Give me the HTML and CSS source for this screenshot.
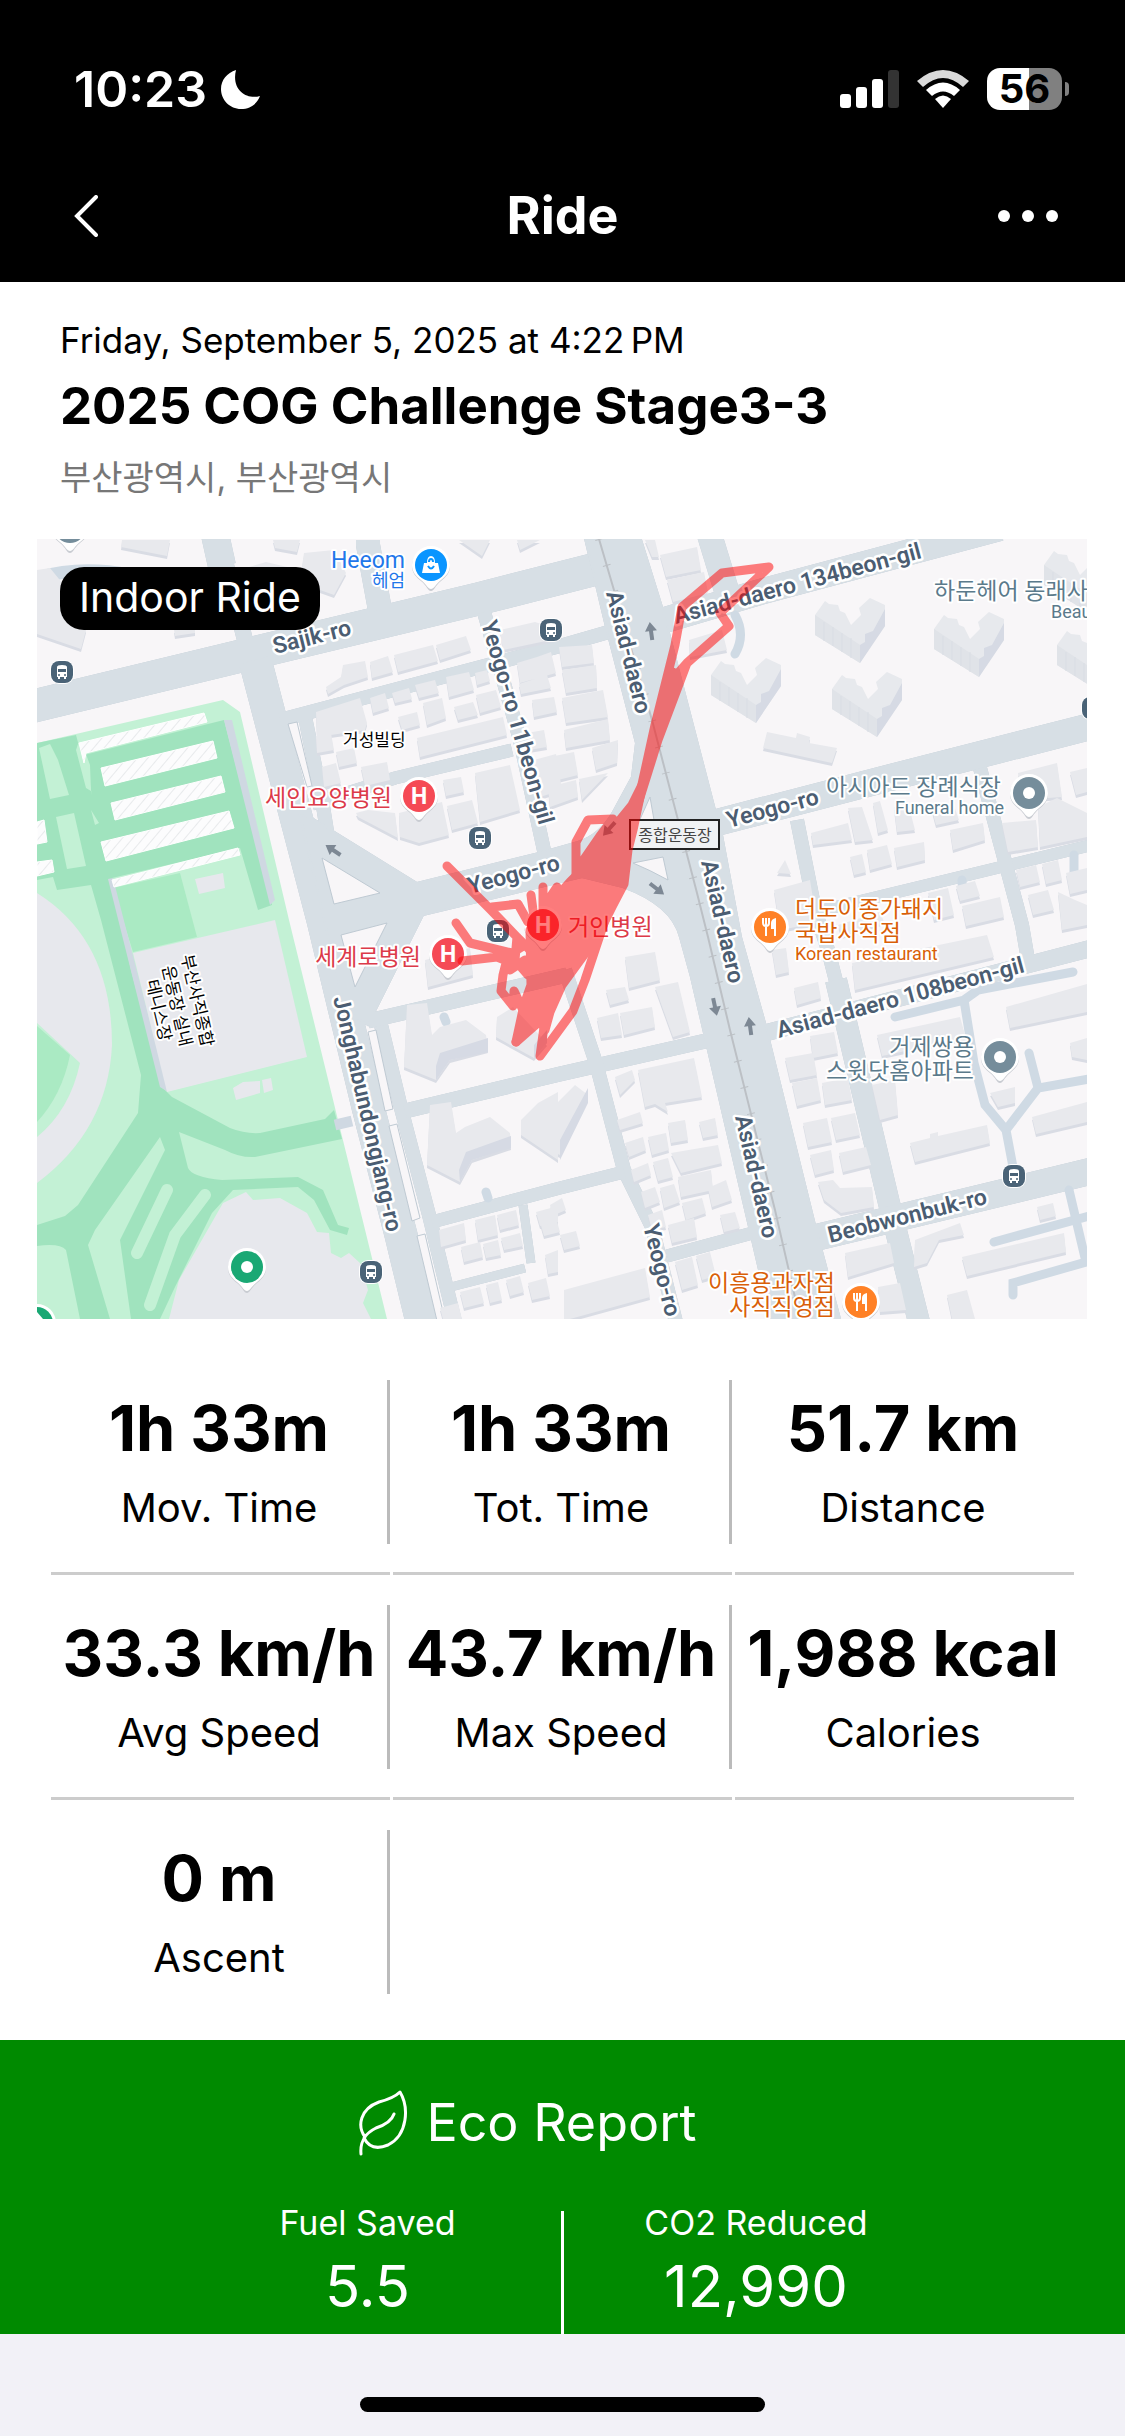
FILE: index.html
```html
<!DOCTYPE html>
<html lang="en">

<head>
  <meta charset="UTF-8">
  <meta name="viewport" content="width=device-width, initial-scale=1.0">
  <title>Ride</title>
  <link rel="stylesheet" href="styles.css">
</head>

<body>
  <div class="app">
    <header class="top">
      <div class="status-bar">
        <span class="clock">10:23</span>
        <svg class="moon" viewBox="0 0 39 39" width="39" height="39" aria-hidden="true">
          <path d="M15 0C6 3 0 10 0 19C0 30 9 39 20 39C29 39 36 34 39 26C26 30 10 20 15 0Z" fill="#fff" />
        </svg>
        <svg class="signal" viewBox="0 0 60 38" width="60" height="38" aria-hidden="true">
          <rect x="0" y="24" width="11" height="14" rx="3" fill="#fff" />
          <rect x="16" y="17" width="11" height="21" rx="3" fill="#fff" />
          <rect x="32" y="9" width="11" height="29" rx="3" fill="#fff" />
          <rect x="48" y="0" width="11" height="38" rx="3" fill="#333" />
        </svg>
        <svg class="wifi" viewBox="0 0 52 38" width="52" height="38" aria-hidden="true">
          <path d="M0 11Q26 -11 52 11L46 17Q26 -1 6 17Z" fill="#d9d9d9" />
          <path d="M9 20Q26 5 43 20L37 26Q26 17 15 26Z" fill="#fff" />
          <path d="M18 29Q26 22 34 29L26 38Z" fill="#fff" />
        </svg>
        <div class="battery">56</div>
      </div>
      <nav class="nav-bar">
        <button class="nav-button" aria-label="Back">
          <svg viewBox="0 0 24 42" width="24" height="42">
            <path d="M22 2L3 21L22 40" fill="none" stroke="#fff" stroke-width="4" stroke-linecap="round" />
          </svg>
        </button>
        <h1 class="nav-title">Ride</h1>
        <button class="nav-button" aria-label="More">
          <svg viewBox="0 0 62 14" width="62" height="14">
            <circle cx="7" cy="7" r="6" fill="#fff" />
            <circle cx="31" cy="7" r="6" fill="#fff" />
            <circle cx="55" cy="7" r="6" fill="#fff" />
          </svg>
        </button>
      </nav>
    </header>

    <main class="content">
      <div class="ride-info">
        <p class="ride-date">Friday, September 5, 2025 at 4:22&#8239;PM</p>
        <h2 class="ride-name">2025 COG Challenge Stage3-3</h2>
        <p class="ride-place">부산광역시, 부산광역시</p>
      </div>

      <div class="map">
        <span class="ride-type">Indoor Ride</span>
        <svg class="map-canvas" viewBox="37 539 1050 780" role="img" aria-label="Map of the ride">
          <defs>
            <symbol id="tower" viewBox="0 0 72 68">
              <path d="M0 17L10 3L14 6L23 7L25 13L30 15L36 27L46 17L44 10L55 0L70 7V28L45 65L0 37Z" fill="#e7e9ed" />
              <path d="M0 17L45 47V65L0 37Z" fill="#e0e3e8" />
              <path d="M45 47L50 44V36L58 33L70 11V28L45 65Z" fill="#d6dae4" />
              <path d="M9 24V43M18 29V48M27 35V54M36 40V60" stroke="#d9dde4" />
            </symbol>
            <symbol id="bus" viewBox="0 0 26 26">
              <rect x="1" y="1" width="24" height="24" rx="9" fill="#fff" />
              <rect x="2" y="2" width="22" height="22" rx="8" fill="#4a6377" />
              <path d="M8 8Q8 6 13 6Q18 6 18 8V18H17V20H15V18H11V20H9V18H8Z" fill="#fff" />
              <path d="M9 10H17V13H9Z" fill="#4a6377" />
              <circle cx="10" cy="16" r="1" fill="#4a6377" />
              <circle cx="16" cy="16" r="1" fill="#4a6377" />
            </symbol>
            <symbol id="pin" viewBox="0 0 42 48">
              <path d="M21 46C18 46 17 41 11 36C6 32 2 28 2 21A19 19 0 0 1 40 21C40 28 36 32 31 36C25 41 24 46 21 46Z" fill="#c9ccd2" />
              <path d="M21 44C18 44 17 40 11 35C6 31 2 27 2 20A19 19 0 0 1 40 20C40 27 36 31 31 35C25 40 24 44 21 44Z" fill="#fff" />
              <circle cx="21" cy="20" r="16" />
            </symbol>
            <symbol id="fork" viewBox="0 0 16 20">
              <path d="M1 1V6Q1 9 4 9V19M4 1V9M7 1V6Q7 9 4 9" fill="none" stroke="#fff" stroke-width="2" />
              <path d="M14 1V19H12V12H9V6Q9 2 14 1Z" fill="#fff" />
            </symbol>
            <path id="arrow" d="M0 -9L6 0H2V9H-2V0H-6Z" />
            <pattern id="hatch" width="8" height="10" patternUnits="userSpaceOnUse" patternTransform="rotate(40)">
              <rect width="8" height="10" fill="#fcfcfd" />
              <path d="M0 0V10" stroke="#d5d8dc" />
            </pattern>
            <g id="streets">
              <path d="M30 707L253 653L478 599L592 570" stroke-width="33" />
              <path d="M217 530L226 565L245 640" stroke-width="16" />
              <path d="M214 530L222 566" stroke-width="28" />
              <path d="M255 660L323 920L368 1107L401 1235L424 1330" stroke-width="33" />
              <path d="M304 712L322 800L330 850M381 1025L401 1108L429 1215L457 1330" stroke-width="14" />
              <path d="M368 540V545L380 610" stroke-width="24" />
              <path d="M280 720L560 646L612 631" stroke-width="14" />
              <path d="M484 612L520 740L545 855" stroke-width="14" />
              <path d="M312 804L395 778L512 750" stroke-width="13" />
              <path d="M715 823L912 772L1100 724" stroke-width="27" />
              <path d="M665 620L760 592L1000 528" stroke-width="26" />
              <path d="M708 530L727 592" stroke-width="25" />
              <path d="M797 820L815 910L828 950L846 1020" stroke-width="14" />
              <path d="M836 980L889 1203L921 1330" stroke-width="22" />
              <path d="M815 912L1100 843" stroke-width="12" />
              <path d="M980 768L1022 925L1028 960" stroke-width="14" />
              <path d="M765 1033L1100 946" stroke-width="17" />
              <path d="M810 1239L1100 1169" stroke-width="27" />
              <path d="M405 1111L560 1074L710 1040M368 1021L567 975" stroke-width="15" />
              <path d="M565 970L596 1063L624 1170L652 1227L678 1330" stroke-width="14" />
              <path d="M432 1222L560 1188L624 1172M667 1256L760 1231" stroke-width="13" />
              <path d="M523 1205L531 1263M451 1287L525 1268" stroke-width="9" />
              <path d="M583 530H638L662 607L669 633L715 810L722 835L741 937L765 1023L815 1225L843 1330H773L704 1033L691 977L680 937Q672 905 623 887L582 877L423 915L368 1025L345 1010L300 815L310 817L417 883L539 853L578 842Q600 835 613 812L632 777L636 743L606 627Z" class="area" />
            </g>
            <g id="blocks">
              <path d="M122 540L170 540L167 556L121 547ZM37 570L50 568L68 590L86 630L81 649L37 634ZM273 540L300 540L297 552L275 548ZM232 572L266 562L300 570L300 585L240 600ZM304 553L334 550L346 573L334 595L320 590L302 566ZM459 540L490 540L482 556ZM517 540L540 540L520 550ZM174 630L195 627L195 633L175 636Z" />
              <path d="M326 687L341 677L343 665L365 661L368 677L344 685L328 694ZM370 662L388 656L393 672L372 678ZM394 655L433 645L438 661L398 672ZM436 645L466 636L471 650L440 660ZM500 630L535 622L560 630V638L503 650Z" />
              <path d="M316 712L360 698L367 723L365 730L317 737ZM370 698L385 693L389 708L373 713ZM392 693L409 688L412 699L395 703ZM415 685L435 680L439 693L419 698ZM446 677L469 672L474 690L449 697ZM475 673L487 670L490 681L477 685ZM398 717L417 712L420 725L402 730ZM423 703L442 698L446 718L427 725ZM454 707L473 702L478 715L458 720ZM476 695L496 690L501 707L480 713ZM417 738L503 717L507 735L420 757ZM316 737L331 733L334 750L317 753ZM336 752L354 748L357 763L339 767ZM361 767L387 762L390 780L365 786ZM322 767L336 763L341 783L324 787Z" />
              <path d="M517 663L537 657L551 652L556 673L520 683ZM519 684L547 675L551 688L521 694ZM532 700L554 697L557 712L534 717ZM527 733L544 730L547 747L529 750ZM534 760L556 754L562 790L540 797ZM356 813L368 810L395 813L398 838L358 817ZM399 813L442 802L449 835L419 843L400 837ZM443 780L461 777L464 792L446 796ZM475 773L510 765L520 810L480 822ZM447 806L472 800L478 823L452 830Z" />
              <path d="M559 647L592 645L594 663L562 667ZM562 670L596 665L597 688L566 693ZM562 698L603 690L608 717L566 723ZM564 730L608 719L610 740L566 748ZM592 748L618 740L617 763L596 770ZM545 758L574 752L578 775L550 782ZM548 787L576 780L578 797L550 807ZM579 779L608 773L582 800Z" />
              <path d="M660 555L697 547L701 570L666 577ZM667 580L704 572L708 593L673 602ZM645 540L655 540L659 557L652 557ZM689 640L722 630L727 650L690 657ZM767 732L796 738L797 733L810 737L809 743L837 748L832 763L763 748Z" />
              <path d="M848 808L862 807L873 840L855 842ZM811 833L848 823L852 840L813 845ZM873 803L880 801L888 830L878 833ZM894 807L908 803L915 830L897 832ZM932 810L953 803L959 820L936 825ZM894 848L924 842L925 860L897 867ZM950 830L983 823L985 840L953 850ZM867 850L887 845L892 864L870 870ZM850 857L862 854L866 872L854 875ZM1002 823L1036 820L1038 847L1008 852ZM1038 807L1057 798L1087 813V837L1040 847ZM1018 773L1057 763L1062 797L1020 800ZM1070 772L1087 768V792L1076 795ZM774 890L810 880L817 923L780 930ZM777 873L785 860L791 874Z" />
              <path d="M928 893L948 888L954 915L934 920ZM956 886L975 881L980 896L960 901ZM962 906L1000 897L1004 917L966 926ZM1016 870L1036 865L1040 882L1020 887ZM1042 864L1058 860L1062 880L1046 884ZM1066 873L1087 868V890L1070 894ZM1028 895L1048 890L1054 910L1033 915ZM1058 892L1075 900L1087 905V925L1062 930ZM838 925L880 912L884 922L842 936Z" />
              <path d="M852 963L987 935L994 957L855 990ZM794 988L818 982L821 998L797 1005ZM772 950L786 948L789 972L776 975ZM785 1058L813 1053L817 1075L790 1080ZM810 1036L834 1032L838 1053L813 1058ZM792 1083L817 1078L821 1100L797 1106ZM822 1083L848 1078L852 1100L825 1105ZM803 1123L827 1118L832 1142L808 1147ZM831 1118L855 1113L860 1135L836 1140ZM810 1155L831 1150L834 1170L815 1175ZM839 1153L866 1147L871 1165L843 1172ZM818 1182L833 1180L840 1188L872 1187L874 1207L841 1213L824 1200ZM877 1035L960 1017L966 1038L882 1056ZM872 1085L895 1080L898 1115L880 1120Z" />
              <path d="M625 957L655 952L660 980L629 988ZM606 990L625 987L629 1000L610 1005ZM620 1013L652 1007L655 1027L624 1035ZM597 1018L618 1013L622 1035L601 1038ZM655 987L678 982L690 1032L673 1037ZM638 1070L694 1058L702 1097L665 1103L668 1112L655 1104L645 1107ZM615 1077L632 1070L635 1080L620 1095ZM617 1120L640 1112L643 1123L620 1130ZM625 1143L643 1137L646 1150L629 1157ZM648 1137L666 1133L669 1150L652 1155ZM668 1123L685 1120L688 1140L671 1143ZM671 1153L718 1145L722 1163L681 1173ZM699 1122L715 1118L718 1135L703 1138ZM678 1177L711 1170L713 1190L681 1197ZM631 1170L648 1163L651 1175L634 1182ZM653 1162L668 1158L673 1177L658 1181ZM641 1192L655 1187L660 1202L645 1208ZM660 1188L674 1184L680 1202L664 1208ZM682 1203L702 1198L706 1213L686 1220ZM708 1188L726 1180L732 1200L712 1207ZM648 1215L662 1210L666 1227L652 1230ZM668 1225L694 1218L697 1237L672 1243ZM675 1262L692 1257L698 1285L682 1290ZM696 1256L710 1252L716 1276L702 1280ZM720 1215L735 1212L740 1228L724 1232Z" />
              <path d="M564 1290L645 1268L650 1297L570 1319H564ZM550 1205L562 1198L566 1210L552 1216ZM540 1222L556 1218L560 1232L544 1236ZM560 1235L576 1231L580 1246L564 1250Z" />
              <path d="M439 1230L464 1223L466 1240L441 1247ZM475 1220L495 1215L498 1235L478 1240ZM497 1215L516 1210L519 1225L500 1230ZM461 1247L480 1242L483 1257L464 1262ZM483 1244L498 1240L501 1255L486 1258ZM501 1238L520 1233L523 1246L504 1250ZM536 1212L558 1206V1222L540 1226ZM460 1292L480 1287L484 1303L464 1308ZM486 1285L498 1282L502 1300L490 1303ZM506 1280L520 1276L524 1292L510 1296ZM528 1283L546 1278L550 1296L532 1300ZM545 1255L558 1250V1272L548 1274ZM440 1308L458 1303L462 1319H443Z" />
              <path d="M910 1143L930 1138V1134L938 1132V1136L987 1125L990 1143L915 1162ZM1006 1007L1087 984V1012L1010 1028ZM1032 1117L1087 1102V1122L1036 1134ZM962 1257L1064 1233L1066 1252L967 1276ZM990 1093L1015 1087V1103L998 1107ZM915 1240L960 1223L964 1235L939 1240L927 1263L914 1267ZM845 1253L890 1243L894 1263L848 1277ZM878 1287L900 1283L906 1310L880 1312ZM947 1295L967 1290L975 1319H952ZM1037 1207L1053 1203L1056 1216L1040 1220ZM1070 1043L1087 1038V1060L1072 1057Z" />
              <path d="M407 1005L427 1003L432 1035L440 1027L466 1020L486 1035L488 1050L450 1060L436 1080L404 1067ZM430 1105L451 1102L456 1133L465 1127L490 1117L510 1133L511 1147L472 1160L460 1182L427 1165ZM497 1017L513 1007L547 1043L534 1058L496 1037ZM538 1103L558 1092V1160L521 1135V1120ZM425 960L470 948L473 975L428 987ZM550 1110L575 1085L588 1095L560 1155L550 1150Z" />
            </g>
          </defs>

          <rect x="37" y="539" width="1050" height="780" fill="#f8f6f8" />

          <!-- sports complex -->
          <path d="M37 743L223 700L240 712L289 920L338 1120L387 1319H37Z" fill="#c3f1d5" />
          <path d="M37 743L76 735L92 795L84 755L224 720L272 905L258 910L240 848L112 878L120 920L131 970L162 1087L172 1097L230 1128Q245 1134 260 1133L325 1119L334 1110L342 1139L255 1157Q240 1158 225 1150L179 1132L188 1168Q192 1177 222 1180L298 1177L323 1190L338 1225L349 1228L347 1235L330 1230L314 1200L298 1187L233 1190L212 1213L175 1287L160 1319H131L120 1240L165 1150L160 1137L95 1230L88 1245L110 1319H80L66 1250Q60 1243 37 1246V1225L65 1216L78 1205L138 1113L141 1075L101 920L91 885L57 890L53 877L37 880Z" fill="#a0e3be" />
          <path d="M167 1190L137 1253M205 1195L175 1235L150 1305" fill="none" stroke="#c3f1d5" stroke-width="12" stroke-linecap="round" />
          <path d="M39 748L50 744L58 760L69 795L50 799ZM56 817L74 813L86 866L67 869ZM80 738L90 765L91 791L86 788L76 750ZM91 810L99 823L95 825Z" fill="#c3f1d5" />
          <path d="M113 888L180 873L197 937L133 952Z" fill="#aaeac3" />
          <path d="M224 720L232 720L275 900L270 905ZM108 879L113 878L168 1092L160 1087Z" fill="#cfd8e2" />
          <path d="M79 743L204 713L207 722L86 753L84 763ZM101 768L213 741L217 758L105 786ZM111 803L221 776L225 792L115 820ZM101 842L229 811L234 828L106 861ZM112 880L238 848L240 855L114 887ZM37 822L44 820L47 842L37 844ZM37 862L52 860L54 872L37 876Z" fill="url(#hatch)" stroke="#fff" />
          <g fill="#e7e8ed">
            <path d="M133 953L275 920L307 1057L167 1092Z" />
            <path d="M37 893Q112 940 112 1045Q108 1130 37 1183Z" />
            <path d="M246 1192L253 1200L280 1198L307 1213L317 1232L329 1233L331 1253L341 1258L349 1253L360 1263L368 1290L363 1303L371 1319H169L179 1280L223 1203Z" />
            <path d="M195 879L223 873L225 888L199 894ZM233 1088L243 1082L260 1081V1093L236 1100ZM262 1080L271 1078L273 1090L264 1093Z" />
          </g>
          <path d="M37 1023L80 1063Q70 1110 37 1137Z" fill="#c3f1d5" />
          <path d="M37 1026L70 1055Q62 1095 37 1122Z" fill="#aaeac3" />

          <!-- roads -->
          <path d="M37 578Q80 565 130 575L180 582" fill="none" stroke="#cfdae4" stroke-width="13" />
          <path d="M335 1125L352 1121" fill="none" stroke="#cfd8e2" stroke-width="11" />
          <use href="#streets" class="street-edge" />
          <use href="#streets" class="street" />
          <g fill="#f8f6f8" stroke="#bfcad3" stroke-width="1">
            <path d="M322 858L380 893L334 904ZM341 935L387 923L355 987ZM288 724L297 722L312 786L307 787Z" />
            <path d="M368 1032L376 1030L393 1109L385 1111ZM389 1126L397 1124L420 1218L412 1221ZM417 1236L425 1234L446 1325H438Z" />
            <path d="M633 863L663 857L668 880Q650 870 633 863ZM650 797L654 820L637 826Z" />
          </g>
          <path d="M735 615Q746 635 735 654M895 1017L964 1000L978 990L1073 972M964 1000L974 1063L985 1105L1006 1130L1013 1167M1006 1130L1038 1088L1100 1077M1038 1088L1029 1053M994 1242L1100 1213M1069 1190L1086 1262L1013 1283V1295M444 1017L446 1022M486 1192L488 1198M962 880L963 898M1074 855V880" class="alley" />
          <g fill="none" stroke="#bcc0c5">
            <path d="M599 539L652 720L697 893L708 937L730 1030L775 1210L800 1319" stroke-width="2" />
            <path d="M599 539L652 720L697 893L708 937L730 1030L775 1210L800 1319" stroke-width="8" stroke-dasharray="1 26" />
          </g>

          <use href="#blocks" fill="#d9dce4" y="3" />
          <use href="#blocks" fill="#e8e9ed" />
          <path d="M436 1066L440 1053L488 1038V1052L450 1060L436 1080ZM459 1170L466 1152L511 1136V1148L472 1160L460 1182ZM534 1045L547 1030V1043L534 1058ZM560 1140L588 1088V1103L560 1160Z" fill="#d6dae4" />
          <use href="#tower" x="815" y="598" width="72" height="68" />
          <use href="#tower" x="934" y="612" width="72" height="68" />
          <use href="#tower" x="711" y="658" width="72" height="68" />
          <use href="#tower" x="832" y="672" width="72" height="68" />
          <use href="#tower" x="1057" y="628" width="72" height="68" />
          <use href="#tower" x="1044" y="548" width="72" height="68" />

          <g fill="#7d8894">
            <use href="#arrow" transform="translate(333 850) rotate(-56)" />
            <use href="#arrow" transform="translate(651 631) rotate(-8)" />
            <use href="#arrow" transform="translate(657 889) rotate(128)" />
            <use href="#arrow" transform="translate(609 829) rotate(222)" />
            <use href="#arrow" transform="translate(715 1007) rotate(168)" />
            <use href="#arrow" transform="translate(750 1026) rotate(-8)" />
          </g>

          <g class="road-name">
            <text transform="translate(275 654) rotate(-14)">Sajik-ro</text>
            <text transform="translate(481 623) rotate(74)">Yeogo-ro 11beon-gil</text>
            <text transform="translate(606 593) rotate(76)">Asiad-daero</text>
            <text transform="translate(676 624) rotate(-15)">Asiad-daero 134beon-gil</text>
            <text transform="translate(729 828) rotate(-15)">Yeogo-ro</text>
            <text transform="translate(470 894) rotate(-15)">Yeogo-ro</text>
            <text transform="translate(701 862) rotate(77)">Asiad-daero</text>
            <text transform="translate(735 1117) rotate(77)">Asiad-daero</text>
            <text transform="translate(333 998) rotate(77)">Jonghabundongjang-ro</text>
            <text transform="translate(643 1226) rotate(76)">Yeogo-ro</text>
            <text transform="translate(779 1038) rotate(-15)">Asiad-daero 108beon-gil</text>
            <text transform="translate(830 1243) rotate(-14)">Beobwonbuk-ro</text>
          </g>

          <g class="place">
            <text x="405" y="568" class="shop" text-anchor="end">Heeom</text>
            <text x="405" y="587" class="shop small" text-anchor="end">헤엄</text>
            <text x="343" y="746" class="building">거성빌딩</text>
            <text x="392" y="806" class="hospital" text-anchor="end">세인요양병원</text>
            <text x="421" y="965" class="hospital" text-anchor="end">세계로병원</text>
            <text x="568" y="935" class="hospital">거인병원</text>
            <text x="934" y="599">하둔헤어 동래사</text>
            <text x="1051" y="618" class="small">Beau</text>
            <text x="1001" y="795" text-anchor="end">아시아드 장례식장</text>
            <text x="1004" y="814" class="small" text-anchor="end">Funeral home</text>
            <text x="974" y="1055" text-anchor="end">거제쌍용</text>
            <text x="974" y="1079" text-anchor="end">스윗닷홈아파트</text>
            <text x="795" y="917" class="food">더도이종가돼지</text>
            <text x="795" y="941" class="food">국밥사직점</text>
            <text x="795" y="960" class="food small">Korean restaurant</text>
            <text x="835" y="1291" class="food" text-anchor="end">이흥용과자점</text>
            <text x="835" y="1315" class="food" text-anchor="end">사직직영점</text>
            <text transform="translate(181 956) rotate(77)" class="building">부산사직종합</text>
            <text transform="translate(162 967) rotate(77)" class="building">운동장 실내</text>
            <text transform="translate(146 981) rotate(77)" class="building">테니스장</text>
          </g>
          <rect x="630" y="820" width="89" height="29" fill="#f0f2f4" stroke="#222" stroke-width="2" />
          <text x="675" y="841" class="station" text-anchor="middle">종합운동장</text>

          <use href="#bus" x="49" y="659" width="26" height="26" />
          <use href="#bus" x="538" y="617" width="26" height="26" />
          <use href="#bus" x="467" y="825" width="26" height="26" />
          <use href="#bus" x="485" y="918" width="26" height="26" />
          <use href="#bus" x="358" y="1259" width="26" height="26" />
          <use href="#bus" x="1001" y="1163" width="26" height="26" />
          <use href="#bus" x="1080" y="695" width="26" height="26" />

          <use href="#pin" x="49" y="507" width="42" height="48" fill="#758d9b" />
          <use href="#pin" x="410" y="545" width="42" height="48" fill="#0a95ff" />
          <path d="M424 563H438L440 573H422ZM427 563Q427 556 431 556Q435 556 435 563" fill="#fff" />
          <path d="M428 566Q431 571 434 566M429 562Q429 559 431 559Q433 559 433 562" fill="none" stroke="#0a95ff" stroke-width="2" />
          <g fill="#f54a55">
            <use href="#pin" x="398" y="776" width="42" height="48" />
            <use href="#pin" x="427" y="934" width="42" height="48" />
            <use href="#pin" x="522" y="905" width="42" height="48" />
          </g>
          <g class="pin-letter">
            <text x="419" y="804">H</text>
            <text x="448" y="962">H</text>
            <text x="543" y="933">H</text>
          </g>
          <g fill="#ff8126">
            <use href="#pin" x="749" y="907" width="42" height="48" />
            <use href="#pin" x="840" y="1282" width="42" height="48" />
          </g>
          <use href="#fork" x="762" y="917" width="16" height="20" />
          <use href="#fork" x="853" y="1292" width="16" height="20" />
          <g fill="#758d9b">
            <use href="#pin" x="1008" y="773" width="42" height="48" />
            <use href="#pin" x="979" y="1037" width="42" height="48" />
          </g>
          <g fill="#1aa874">
            <use href="#pin" x="226" y="1247" width="42" height="48" />
            <use href="#pin" x="16" y="1303" width="42" height="48" />
          </g>
          <g fill="#fff">
            <circle cx="1029" cy="793" r="6" />
            <circle cx="1000" cy="1057" r="6" />
            <circle cx="247" cy="1267" r="6" />
            <path d="M37 1312L43 1319H37Z" />
          </g>

          <!-- recorded track -->
          <g class="track">
            <path d="M637 807L655 725L675 645L682 607L722 573L769 567L720 613L729 626L687 663L672 680M687 663L658 740L637 807M673 672L655 745" />
            <path d="M576 875V842L588 820L613 819L600 836L580 865" />
            <path d="M616 887L585 980L573 1011L540 1056L545 1020" />
            <path d="M447 866L490 909L517 937L530 950M492 907L518 904L528 922M456 923L470 943L512 953L525 945M462 961L497 957L525 968M508 955L503 975L501 991L513 1006L514 991L523 1010M531 895L535 925M543 887V925M557 887L545 905M557 887L568 930M517 937L515 960L528 975" />
            <path d="M516 1042L533 1008M510 970L525 960" />
            <path d="M643 783L633 830L628 850L624 884L613 905L597 937L562 985L550 1012L545 1030L541 1020L516 1042L524 1005L531 985L530 930L545 910L570 882L592 860L606 837L632 805Z" class="track-area" />
          </g>
        </svg>
      </div>

      <section class="stats">
        <div class="stat">
          <div class="stat-body">
            <p class="stat-value">1h 33m</p>
            <p class="stat-label">Mov. Time</p>
          </div>
        </div>
        <div class="stat">
          <div class="stat-body">
            <p class="stat-value">1h 33m</p>
            <p class="stat-label">Tot. Time</p>
          </div>
        </div>
        <div class="stat">
          <div class="stat-body">
            <p class="stat-value">51.7 km</p>
            <p class="stat-label">Distance</p>
          </div>
        </div>
        <div class="stat">
          <div class="stat-body">
            <p class="stat-value">33.3 km/h</p>
            <p class="stat-label">Avg Speed</p>
          </div>
        </div>
        <div class="stat">
          <div class="stat-body">
            <p class="stat-value">43.7 km/h</p>
            <p class="stat-label">Max Speed</p>
          </div>
        </div>
        <div class="stat">
          <div class="stat-body">
            <p class="stat-value">1,988 kcal</p>
            <p class="stat-label">Calories</p>
          </div>
        </div>
        <div class="stat last-row">
          <div class="stat-body">
            <p class="stat-value">0 m</p>
            <p class="stat-label">Ascent</p>
          </div>
        </div>
      </section>

      <section class="eco">
        <h2 class="eco-title">
          <svg viewBox="0 0 50 66" width="50" height="66" aria-hidden="true">
            <path d="M3 64Q2 54 7 47C-1 36 2 19 21 12Q36 8 42 2C51 17 50 45 30 55Q13 62 6 48Q10 42 18 38Q33 33 36 24" fill="none" stroke="#fff" stroke-width="3" stroke-linecap="round" stroke-linejoin="round" />
          </svg>
          Eco Report
        </h2>
        <div class="eco-items">
          <div class="eco-item">
            <p class="eco-label">Fuel Saved</p>
            <p class="eco-value">5.5</p>
          </div>
          <div class="eco-item">
            <p class="eco-label">CO2 Reduced</p>
            <p class="eco-value">12,990</p>
          </div>
        </div>
      </section>
    </main>

    <footer class="home-area">
      <div class="home-indicator"></div>
    </footer>
  </div>
</body>

</html>
```
FILE: styles.css
```css
* {
  box-sizing: border-box;
}

body {
  margin: 0;
  background-color: white;
  color: black;
  font-family: Inter, "Noto Sans CJK KR", sans-serif;
}

h1,
h2,
p {
  margin: 0;
}

.app {
  display: flex;
  flex-direction: column;
  height: 100vh;
}

/* Status bar and navigation */
.top {
  flex-shrink: 0;
  background-color: black;
  color: white;
  padding: 58px 56px 0 74px;
}

.status-bar {
  display: flex;
  align-items: center;
  height: 62px;
}

.clock {
  font-size: 50px;
  font-weight: 600;
  line-height: 62px;
}

.moon {
  margin-left: 14px;
}

.signal {
  margin-left: auto;
}

.wifi {
  margin-left: 17px;
}

.battery {
  position: relative;
  width: 75px;
  height: 42px;
  margin-left: 18px;
  margin-right: 7px;
  border-radius: 13px;
  background: linear-gradient(to right, white 56%, #808080 56%);
  color: black;
  font-size: 40px;
  font-weight: 700;
  line-height: 42px;
  text-align: center;
}

.battery::after {
  content: "";
  position: absolute;
  right: -7px;
  top: 14px;
  width: 4px;
  height: 14px;
  border-radius: 0 4px 4px 0;
  background-color: #808080;
}

.nav-bar {
  display: grid;
  grid-template-columns: 1fr auto 1fr;
  align-items: center;
  height: 162px;
  padding-top: 30px;
  margin-left: -18px;
}

.nav-button {
  display: flex;
  padding: 18px;
  border: none;
  background: none;
  cursor: pointer;
}

.nav-button:last-child {
  justify-self: end;
  padding-right: 10px;
}

.nav-button svg {
  display: block;
}

.nav-title {
  font-size: 52px;
  font-weight: 700;
  line-height: 64px;
}

/* Ride heading */
.content {
  flex: 1;
  min-height: 0;
  overflow: hidden;
}

.ride-info {
  padding: 32px 60px 0;
}

.ride-date {
  font-size: 35px;
  line-height: 52px;
}

.ride-name {
  margin-top: 8px;
  font-size: 51px;
  font-weight: 700;
  line-height: 64px;
}

.ride-place {
  margin-top: 14px;
  color: #777;
  font-size: 34px;
  line-height: 52px;
}

/* Map */
.map {
  position: relative;
  margin: 35px 38px 0 37px;
}

.map-canvas {
  display: block;
  width: 100%;
}

.ride-type {
  position: absolute;
  top: 28px;
  left: 23px;
  padding: 0 19px 3px;
  border-radius: 24px;
  background-color: black;
  color: white;
  font-size: 41px;
  line-height: 60px;
}

.street,
.street-edge {
  fill: none;
  stroke: #d7dfe5;
}

.street {
  clip-path: none;
}

.street-edge {
  stroke: #bfcad3;
}

#streets .area {
  fill: #d7dfe5;
  stroke-width: 2;
}

.alley {
  fill: none;
  stroke: #cfdae4;
  stroke-width: 9;
  stroke-linecap: round;
}

.road-name {
  fill: #4b5d72;
  stroke: white;
  stroke-width: 5;
  stroke-linejoin: round;
  paint-order: stroke;
  font-family: Roboto, sans-serif;
  font-size: 23px;
  font-weight: 600;
}

.place {
  fill: #5b7a8b;
  stroke: white;
  stroke-width: 4;
  stroke-linejoin: round;
  paint-order: stroke;
  font-family: Roboto, "Noto Sans CJK KR", sans-serif;
  font-size: 23px;
}

.place .small {
  font-size: 18px;
}

.place .shop {
  fill: #1f77ea;
}

.place .hospital {
  fill: #dc3a49;
}

.place .food {
  fill: #d95f08;
}

.place .building {
  fill: black;
  font-size: 17px;
}

.station {
  fill: #444;
  font-family: "Noto Sans CJK KR", sans-serif;
  font-size: 16px;
}

.pin-letter {
  fill: white;
  font-family: Roboto, sans-serif;
  font-size: 23px;
  font-weight: 700;
  text-anchor: middle;
}

.track {
  fill: none;
  stroke: red;
  stroke-width: 9;
  stroke-linecap: round;
  stroke-linejoin: round;
  opacity: 0.5;
}

.track .track-area {
  fill: red;
}

/* Ride figures */
.stats {
  display: grid;
  grid-template-columns: repeat(3, 1fr);
  column-gap: 3px;
  padding: 31px 51px 18px;
}

.stat {
  padding: 30px 0 28px;
  border-bottom: 3px solid #ccc;
}

.last-row {
  border-bottom: none;
}

.stat-body {
  height: 164px;
  padding-top: 8px;
  border-right: 3px solid #bbb;
  text-align: center;
  white-space: nowrap;
}

.stat:nth-child(3n) .stat-body {
  border-right-color: transparent;
}

.stat-value {
  font-size: 63px;
  font-weight: 700;
  line-height: 80px;
}

.stat-label {
  font-size: 40px;
  line-height: 80px;
}

/* Eco report */
.eco {
  padding-top: 48px;
  background-color: #008a00;
  color: white;
}

.eco-title {
  display: flex;
  justify-content: center;
  align-items: center;
  gap: 18px;
  padding-right: 70px;
  font-size: 52px;
  font-weight: 400;
  line-height: 70px;
}

.eco-items {
  display: grid;
  grid-template-columns: 387px 387px;
  justify-content: center;
  padding-top: 53px;
  padding-right: 3px;
}

.eco-item {
  height: 160px;
  text-align: center;
}

.eco-item + .eco-item {
  border-left: 3px solid white;
}

.eco-label {
  margin-top: -8px;
  font-size: 34px;
  line-height: 40px;
}

.eco-value {
  margin-top: 8px;
  font-size: 58px;
  line-height: 70px;
}

/* Home indicator */
.home-area {
  display: flex;
  flex-shrink: 0;
  justify-content: center;
  align-items: flex-end;
  height: 102px;
  padding-bottom: 24px;
  background-color: #f2f1f7;
}

.home-indicator {
  width: 36%;
  height: 15px;
  border-radius: 8px;
  background-color: black;
}
```
